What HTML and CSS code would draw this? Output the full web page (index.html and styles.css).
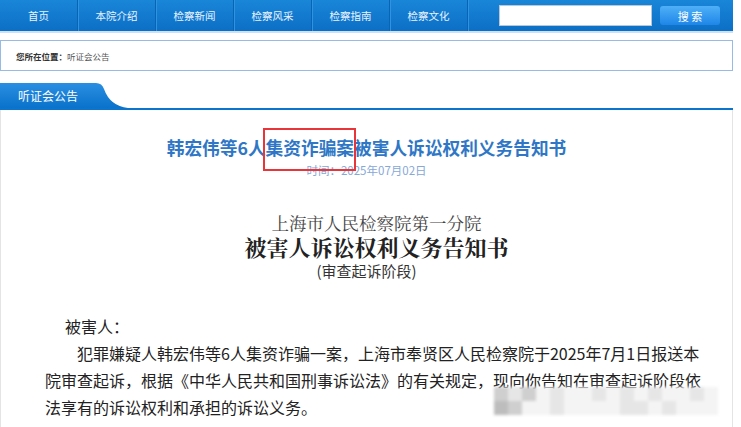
FILE: index.html
```html
<!DOCTYPE html>
<html lang="zh-CN">

<head>
  <meta charset="UTF-8">
  <meta name="viewport" content="width=device-width, initial-scale=1.0">
  <title>听证会公告</title>

  <link rel="stylesheet" href="styles.css">
</head>

<body>
  <div class="nav">
    <a class="nav-item">首页</a>
    <a class="nav-item">本院介绍</a>
    <a class="nav-item">检察新闻</a>
    <a class="nav-item">检察风采</a>
    <a class="nav-item">检察指南</a>
    <a class="nav-item">检察文化</a>
    <div class="search">
      <input type="text" class="search-input">
      <button class="search-btn">搜 索</button>
    </div>
  </div>

  <div class="crumb">
    <b>您所在位置：</b>听证会公告
  </div>

  <div class="column">
    <div class="column-head">
      <div class="tab">听证会公告</div>
    </div>

    <div class="article">
      <h1 class="title">韩宏伟等6人<span class="mark">集资诈骗案</span>被害人诉讼权利义务告知书</h1>
      <div class="date">时间：2025年07月02日</div>

      <div class="doc-head">
        <div class="org">上海市人民检察院第一分院</div>
        <div class="doc-name">被害人诉讼权利义务告知书</div>
        <div class="stage">(审查起诉阶段)</div>
      </div>

      <div class="body">
        <p class="to">被害人：</p>
        <p class="para">犯罪嫌疑人韩宏伟等6人集资诈骗一案，上海市奉贤区人民检察院于2025年7月1日报送本院审查起诉，根据《中华人民共和国刑事诉讼法》的有关规定，现向你告知在审查起诉阶段依法享有的诉讼权利和承担的诉讼义务。</p>
      </div>

      <div class="mosaic">
        <div class="mosaic-row">
          <span class="m3"></span><span class="m2"></span><span class="m3"></span><span class="m1"></span><span class="m2"></span><span class="m1"></span><span class="m1"></span><span class="m2"></span><span class="m1"></span><span class="m2"></span><span class="m1"></span><span class="m2"></span><span class="m1"></span><span class="m1"></span><span class="m2"></span><span class="m1"></span>
        </div>
        <div class="mosaic-row">
          <span class="m4"></span><span class="m3"></span><span class="m1"></span><span class="m1"></span><span class="m2"></span><span class="m1"></span><span class="m1"></span><span class="m1"></span><span class="m1"></span><span class="m2"></span><span class="m2"></span><span class="m1"></span><span class="m2"></span><span class="m1"></span><span class="m1"></span><span class="m1"></span>
        </div>
      </div>
    </div>
  </div>
</body>

</html>
```

FILE: styles.css
```css
body,
html {
  font-family: "Noto Sans CJK SC", "Noto Sans", sans-serif;
  background-color: #fff;

  padding: 0;
  margin: 0;

  width: 100%;
  overflow: hidden;
}

* {
  box-sizing: border-box;
}

/* top navigation */

.nav {
  display: flex;
  align-items: center;

  width: 733px;
  height: 31px;

  background: linear-gradient(#1a86d8, #0b6fc6);
  border-bottom: 2px solid #cfe0f3;
  box-sizing: content-box;
}

.nav-item {
  display: flex;
  justify-content: center;
  align-items: center;

  width: 78px;
  height: 31px;

  color: #e9f3ff;
  font-size: 10.5px;
  text-decoration: none;

  border-right: 1px solid #0a64b4;
  box-shadow: 1px 0 0 #2f93df;
}

.search {
  display: flex;
  align-items: center;

  margin-left: 31px;
}

.search-input {
  width: 153px;
  height: 21px;

  margin: 0;
  padding: 0;

  background-color: #fff;
  border: 1px solid #b8c8d8;
}

.search-btn {
  width: 60px;
  height: 19px;

  margin-left: 8px;
  padding: 0;

  color: #fff;
  font-family: "Noto Sans CJK SC", sans-serif;
  font-size: 11px;

  background: linear-gradient(#4fb0f7, #1e86e8);
  border: none;
  border-radius: 3px;
}

/* breadcrumb */

.crumb {
  display: flex;
  align-items: center;

  width: 733px;
  height: 31px;

  margin-top: 7px;
  padding-left: 15px;

  color: #555;
  font-size: 8.5px;

  border: 1px solid #98bbe4;
}

.crumb b {
  color: #333;
}

/* column */

.column {
  width: 733px;
  margin-top: 12px;
}

.column-head {
  height: 25px;
  border-bottom: 2px solid #0b74cc;
  box-sizing: content-box;
}

.tab {
  display: flex;
  align-items: center;

  width: 130px;
  height: 25px;

  padding-left: 18px;

  color: #fff;
  font-size: 12px;

  background: linear-gradient(#2a8fe2, #0a72cb);
  clip-path: path("M0 0 H96 Q102 0 104 6 Q110 23 128 25 H0 Z");
}

.article {
  position: relative;

  height: 320px;
  padding-top: 25px;

  border-left: 1px solid #e4e4e4;
  border-right: 1px solid #e4e4e4;
}

.title {
  margin: 0;

  color: #2f77c6;
  font-size: 17.7px;
  font-weight: bold;
  line-height: 24px;
  text-align: center;
}

.mark {
  position: relative;
}

.mark::after {
  content: "";
  position: absolute;
  left: -3px;
  right: -2px;
  top: -6px;
  height: 39px;

  border: 2px solid #e8353a;
}

.date {
  margin-top: 3px;

  color: #86a8d8;
  font-size: 11.5px;
  line-height: 16px;
  text-align: center;
}

.doc-head {
  margin-top: 33px;
  text-align: center;
}

.org {
  padding-left: 20px;

  color: #444;
  font-family: "Noto Serif CJK SC", "Noto Sans CJK SC", serif;
  font-size: 17.5px;
  line-height: 24px;
}

.doc-name {
  padding-left: 20px;

  color: #222;
  font-family: "Noto Serif CJK SC", "Noto Sans CJK SC", serif;
  font-size: 22px;
  font-weight: bold;
  line-height: 24px;
}

.stage {
  color: #333;
  font-size: 15px;
  line-height: 24px;
}

.body {
  margin-top: 30px;
  padding-left: 44px;
  width: 700px;

  color: #222;
  font-size: 16px;
}

.body p {
  margin: 0;
  line-height: 27px;
}

.to {
  padding-left: 20px;
}

.para {
  width: 656px;
  text-indent: 32px;
}

/* blurred patch bottom right */

.mosaic {
  position: absolute;
  left: 493px;
  top: 277px;

  filter: blur(1.5px);
}

.mosaic-row {
  display: flex;
}

.mosaic-row span {
  width: 14px;
  height: 14px;
}

.m1 {
  background-color: #f4f4f4;
}

.m2 {
  background-color: #e6e6e6;
}

.m3 {
  background-color: #cfcfcf;
}

.m4 {
  background-color: #bdbdbd;
}
```
